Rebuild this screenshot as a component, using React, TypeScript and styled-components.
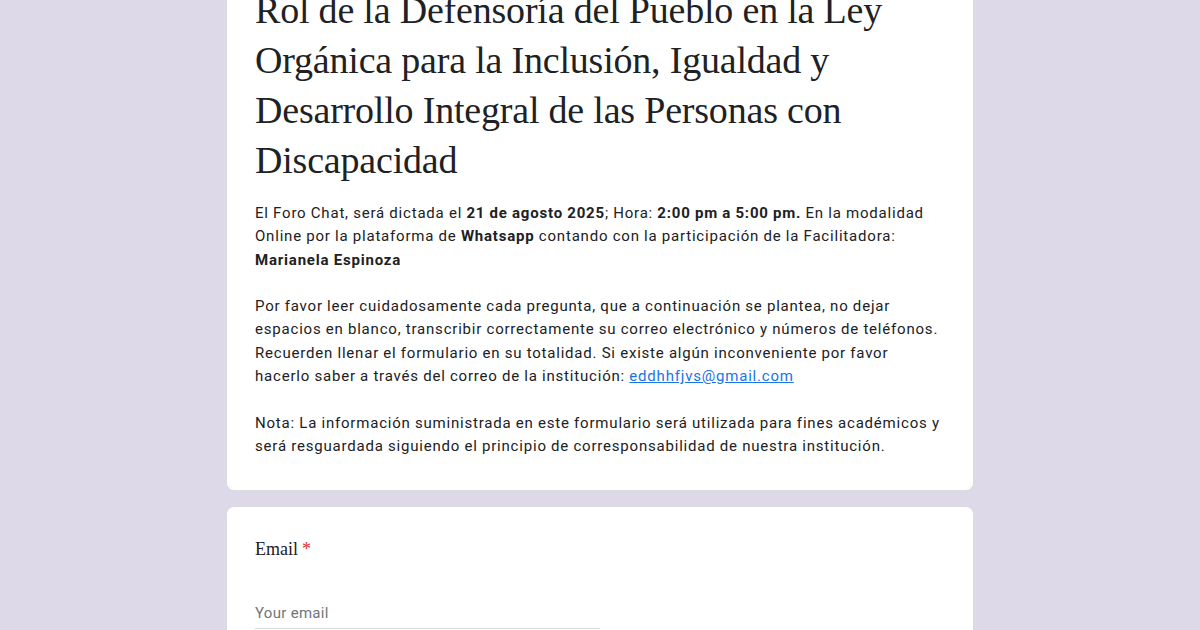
import React from 'react';
import styled, { createGlobalStyle } from 'styled-components';

const GlobalStyle = createGlobalStyle`
  html, body {
    margin: 0;
    padding: 0;
    background: #ddd9e9;
    overflow: hidden;
  }
`;

const Page = styled.div`
  display: flex;
  flex-direction: column;
  align-items: center;
  gap: 15px;
  margin-top: -25px;
`;

const Card = styled.div<{ $top?: number; $bottom?: number }>`
  box-sizing: border-box;
  width: 748px;
  background: #fff;
  border: 1px solid #dadce0;
  border-radius: 8px;
  padding: ${(p) => p.$top ?? 24}px 28px ${(p) => p.$bottom ?? 24}px;
`;

const Title = styled.h1`
  margin: 0;
  font-family: 'Liberation Serif', 'Times New Roman', serif;
  font-weight: 400;
  font-size: 38px;
  line-height: 50px;
  letter-spacing: -0.2px;
  color: #202124;
`;

const Description = styled.div`
  margin-top: 17px;
  font-family: Roboto, 'Liberation Sans', Arial, sans-serif;
  font-size: 15px;
  line-height: 23.3px;
  letter-spacing: 0.8px;
  word-spacing: -0.2px;
  color: #202124;

  b {
    font-weight: 700;
  }

  a {
    color: #1a73e8;
    text-decoration: underline;
  }
`;

const Question = styled.div`
  font-family: 'Liberation Serif', 'Times New Roman', serif;
  font-size: 18px;
  line-height: 24px;
  color: #202124;
`;

const Required = styled.span`
  color: #d93025;
  margin-left: 4px;
`;

const Input = styled.div`
  margin-top: 41px;
  width: 345px;
  padding-bottom: 4px;
  border-bottom: 1px solid #dadce0;
  font-family: Roboto, 'Liberation Sans', Arial, sans-serif;
  font-size: 15px;
  line-height: 22px;
  letter-spacing: 0.3px;
  color: #70757a;
`;

export default function App() {
  return (
    <>
      <GlobalStyle />
      <Page>
        <Card $top={9} $bottom={32}>
          <Title>
            Rol de la Defensoría del Pueblo en la Ley Orgánica para la Inclusión, Igualdad y Desarrollo
            Integral de las Personas con Discapacidad
          </Title>
          <Description>
            El Foro Chat, será dictada el <b>21 de agosto 2025</b>; Hora: <b>2:00 pm a 5:00 pm.</b> En la
            modalidad Online por la plataforma de <b>Whatsapp</b> contando con la participación de la
            Facilitadora: <b>Marianela Espinoza</b>
            <br />
            <br />
            Por favor leer cuidadosamente cada pregunta, que a continuación se plantea, no dejar espacios en
            blanco, transcribir correctamente su correo electrónico y números de teléfonos. Recuerden llenar el
            formulario en su totalidad. Si existe algún inconveniente por favor hacerlo saber a través del
            correo de la institución: <a href="#">eddhhfjvs@gmail.com</a>
            <br />
            <br />
            Nota: La información suministrada en este formulario será utilizada para fines académicos y será
            resguardada siguiendo el principio de corresponsabilidad de nuestra institución.
          </Description>
        </Card>
        <Card $top={30}>
          <Question>
            Email<Required>*</Required>
          </Question>
          <Input>Your email</Input>
        </Card>
      </Page>
    </>
  );
}
